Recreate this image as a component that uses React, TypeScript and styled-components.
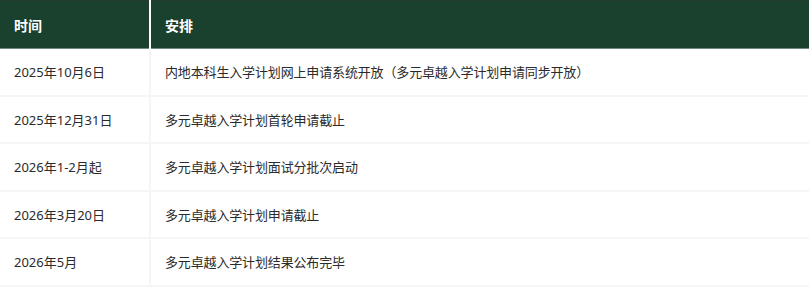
import React from "react";
import styled, { createGlobalStyle } from "styled-components";

const Global = createGlobalStyle`
  html, body { margin: 0; padding: 0; background: #fff; }
  body { font-family: "Noto Sans", "Noto Sans CJK SC", sans-serif; }
`;

const Table = styled.table`
  width: 809px;
  border-collapse: collapse;
  table-layout: fixed;
  font-family: "Noto Sans", "Noto Sans CJK SC", sans-serif;
`;

const HeadRow = styled.tr`
  background: #1a402e;
  border-top: 1px solid #223a2c;
`;

const Th = styled.th<{ $w?: number }>`
  box-sizing: border-box;
  width: ${(p) => (p.$w ? `${p.$w}px` : "auto")};
  height: 48px;
  padding: 0 14px;
  text-align: left;
  color: #fff;
  font-size: 14px;
  font-weight: 700;
  border-right: 2px solid #fff;
  border-bottom: 1px solid #6f8a7c;
  &:last-child { border-right: none; }
`;

const Td = styled.td`
  height: 45.5px;
  padding: 0 14px;
  font-size: 13px;
  letter-spacing: -0.15px;
  color: #2b2b2b;
  border: 2px solid #f5f5f5;
  border-top: none;
  &:first-child { border-left: none; letter-spacing: 0; }
  &:last-child { border-right: none; }
`;

const rows: [string, string][] = [
  ["2025年10月6日", "内地本科生入学计划网上申请系统开放（多元卓越入学计划申请同步开放）"],
  ["2025年12月31日", "多元卓越入学计划首轮申请截止"],
  ["2026年1-2月起", "多元卓越入学计划面试分批次启动"],
  ["2026年3月20日", "多元卓越入学计划申请截止"],
  ["2026年5月", "多元卓越入学计划结果公布完毕"],
];

export default function App() {
  return (
    <>
      <Global />
      <Table>
        <thead>
          <HeadRow>
            <Th $w={150}>时间</Th>
            <Th>安排</Th>
          </HeadRow>
        </thead>
        <tbody>
          {rows.map(([t, a]) => (
            <tr key={t}>
              <Td>{t}</Td>
              <Td>{a}</Td>
            </tr>
          ))}
        </tbody>
      </Table>
    </>
  );
}
